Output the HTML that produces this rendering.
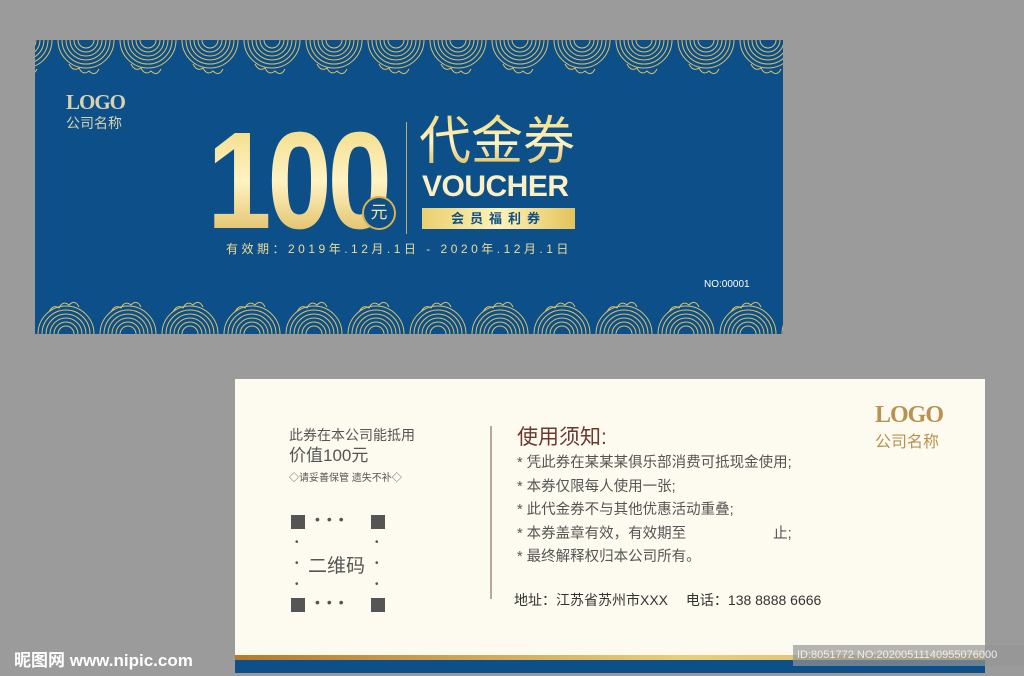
<!DOCTYPE html>
<html><head><meta charset="utf-8"><style>
body{margin:0;width:1024px;height:676px;background:#9b9b9b;position:relative;overflow:hidden;font-family:"Liberation Sans","Noto Sans CJK SC",sans-serif}
.a{position:absolute;white-space:nowrap}
.blue{left:35px;top:40px;width:748px;height:294px;background:#0d4f88;overflow:hidden}
.cream{left:235px;top:379px;width:750px;height:294px;background:#fdfbef;overflow:hidden}
.gold{background:linear-gradient(180deg,#f0d77a,#fff3c4 50%,#d9b24e);-webkit-background-clip:text;color:transparent}
</style></head><body>
<div class="a blue">
<svg width="748" height="294" style="position:absolute;left:0;top:0">
<defs>
<pattern id="wb" width="62" height="44" patternUnits="userSpaceOnUse" x="0" y="250">
<g fill="none" stroke="#d8c06a" stroke-width="1">
<circle cx="31" cy="44" r="8"/><circle cx="31" cy="44" r="12"/><circle cx="31" cy="44" r="16"/><circle cx="31" cy="44" r="20"/><circle cx="31" cy="44" r="24"/><circle cx="31" cy="44" r="28"/>
<path d="M14 22 q4 -8 10 -4 q4 -8 10 -3 q6 -6 10 2"/>
</g></pattern>
<pattern id="wt" width="62" height="44" patternUnits="userSpaceOnUse" x="20" y="0">
<g fill="none" stroke="#d8c06a" stroke-width="1">
<circle cx="31" cy="0" r="8"/><circle cx="31" cy="0" r="12"/><circle cx="31" cy="0" r="16"/><circle cx="31" cy="0" r="20"/><circle cx="31" cy="0" r="24"/><circle cx="31" cy="0" r="28"/>
<path d="M14 24 q4 8 10 4 q4 8 10 3 q6 6 10 -2"/>
</g></pattern>
</defs>
<rect x="0" y="0" width="748" height="44" fill="url(#wt)"/>
<rect x="0" y="250" width="748" height="44" fill="url(#wb)"/>
</svg>
<div class="a" style="left:31px;top:50px;font-family:'Liberation Serif',serif;font-weight:bold;font-size:21px;color:#d8d2b0;letter-spacing:-1px">LOGO</div>
<div class="a" style="left:31px;top:73px;font-size:14px;color:#d8d2b0">公司名称</div>
<div class="a gold" style="left:172px;top:72px;font-size:138px;font-weight:bold;letter-spacing:-5px;line-height:138px;transform:scaleX(.84);transform-origin:left">100</div>
<div class="a" style="left:327px;top:156px;width:30px;height:30px;border-radius:50%;background:#0d4f88;border:2px solid #d9b24e;color:#f5e3a0;font-size:17px;text-align:center;line-height:29px">元</div>
<div class="a" style="left:371px;top:82px;width:1px;height:112px;background:#c8ad5c"></div>
<div class="a gold" style="left:384px;top:72px;font-size:52px;line-height:60px">代金券</div>
<div class="a" style="left:387px;top:130px;font-size:30px;font-weight:bold;color:#fbf0c4;letter-spacing:-0.5px">VOUCHER</div>
<div class="a" style="left:387px;top:168px;width:153px;height:21px;background:linear-gradient(90deg,#e9cf6d,#fff2b8,#e3c35a);color:#0d4f88;font-size:13px;font-weight:bold;text-align:center;line-height:21px;letter-spacing:6px">会员福利券</div>
<div class="a" style="left:191px;top:200px;font-size:12px;color:#eedc9b;letter-spacing:3.5px">有效期：2019年.12月.1日 - 2020年.12月.1日</div>
<div class="a" style="left:669px;top:239px;font-size:10px;color:#fff">NO:00001</div>
</div>
<div class="a cream">
<div class="a" style="left:54px;top:46px;font-size:14px;color:#555">此券在本公司能抵用</div>
<div class="a" style="left:54px;top:62px;font-size:17px;color:#555">价值100元</div>
<div class="a" style="left:54px;top:90px;font-size:10px;color:#555">◇请妥善保管 遗失不补◇</div>
<div class="a" style="left:56px;top:136px;width:14px;height:14px;background:#555"></div>
<div class="a" style="left:136px;top:136px;width:14px;height:14px;background:#555"></div>
<div class="a" style="left:56px;top:219px;width:14px;height:14px;background:#555"></div>
<div class="a" style="left:136px;top:219px;width:14px;height:14px;background:#555"></div>
<div class="a" style="left:80px;top:132px;font-size:14px;color:#555;letter-spacing:7px">•••</div>
<div class="a" style="left:80px;top:215px;font-size:14px;color:#555;letter-spacing:7px">•••</div>
<div class="a" style="left:60px;top:153px;font-size:10px;color:#555;line-height:21px">•<br>•<br>•</div>
<div class="a" style="left:60px;top:153px;font-size:10px;color:#555;line-height:21px;margin-left:80px">•<br>•<br>•</div>
<div class="a" style="left:73px;top:172px;font-size:19px;color:#555">二维码</div>
<div class="a" style="left:255px;top:47px;width:2px;height:173px;background:#b9a79a"></div>
<div class="a" style="left:282px;top:42px;font-size:21px;color:#6b3a2e">使用须知:</div>
<div class="a" style="left:282px;top:73px;font-size:14.5px;color:#555;line-height:23.5px">* 凭此券在某某某俱乐部消费可抵现金使用;<br>* 本券仅限每人使用一张;<br>* 此代金券不与其他优惠活动重叠;<br>* 本券盖章有效，有效期至　　　　　　止;<br>* 最终解释权归本公司所有。</div>
<div class="a" style="left:279px;top:211px;font-size:14px;color:#333">地址：江苏省苏州市XXX　 电话：138 8888 6666</div>
<div class="a" style="left:640px;top:23px;font-family:'Liberation Serif',serif;font-weight:bold;font-size:24px;color:#b89250;letter-spacing:-1px">LOGO</div>
<div class="a" style="left:640px;top:49px;font-size:16px;color:#b89250">公司名称</div>
<div class="a" style="left:0;top:276px;width:750px;height:5px;background:linear-gradient(90deg,#b57a2c,#e8cf7a 60%,#d7b868)"></div>
<div class="a" style="left:0;top:281px;width:750px;height:13px;background:#0d4f88"></div>
</div>
<div class="a" style="left:793px;top:645px;width:231px;height:21px;background:rgba(150,150,150,.7);color:#eee;font-size:11px;line-height:21px;padding-left:4px">ID:8051772 NO:20200511140955076000</div>
<div class="a" style="left:14px;top:646px;font-size:17px;font-weight:bold;color:#fff">昵图网 www.nipic.com</div>
</body></html>
